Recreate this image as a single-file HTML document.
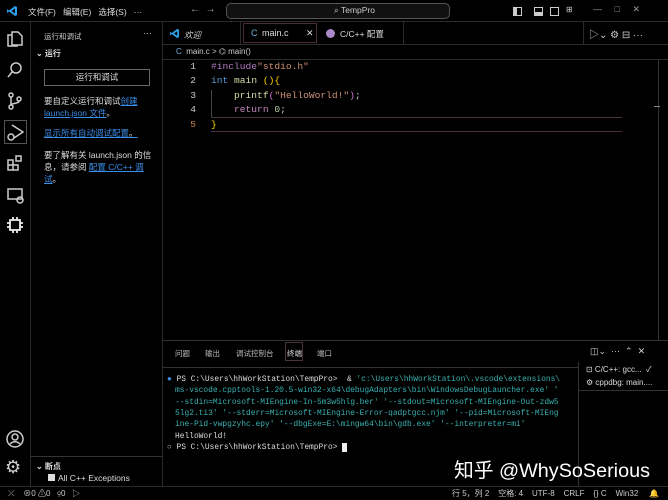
<!DOCTYPE html><html><head><meta charset="utf-8"><style>
*{margin:0;padding:0;box-sizing:border-box}
body{width:668px;height:500px;background:#000;color:#ccc;font-family:"Liberation Sans","Noto Sans CJK SC",sans-serif;font-size:9px;position:relative;overflow:hidden}
.a{position:absolute;white-space:nowrap}
.mono{font-family:"Liberation Mono",monospace}
.ln{position:absolute;width:20px;text-align:right;left:176px;color:#ccc}
.code{position:absolute;left:211px;white-space:pre}
.t{position:absolute;left:175px;white-space:pre;color:#3ab0b0;font-size:7.9px}
svg{position:absolute}
.ic{position:absolute;left:5px}
</style></head><body>
<!-- title bar -->
<div class="a" style="left:0;top:0;width:668px;height:22px;background:#000;border-bottom:1px solid #2b2b2b"></div>
<svg style="left:6px;top:5px" width="12" height="12" viewBox="0 0 12 12"><path d="M9 1 L11 2 V10 L9 11 L3 6.5 L1 8 V4 L3 5.5Z M9 3.5 L5.5 6 L9 8.5Z" fill="#2f9fe8" fill-rule="evenodd"/></svg>
<div class="a" style="left:28px;top:6px;font-size:8.5px;color:#ddd">文件(F)&nbsp;&nbsp;&nbsp;编辑(E)&nbsp;&nbsp;&nbsp;选择(S)&nbsp;&nbsp;&nbsp;···</div>
<div class="a" style="left:190px;top:4px;font-size:10px;color:#aaa">←&nbsp;&nbsp;→</div>
<div class="a" style="left:226px;top:3px;width:224px;height:16px;border:1px solid #555;border-radius:5px;background:#111"></div>
<div class="a" style="left:334px;top:5px;font-size:8.5px;color:#ccc">⌕ TempPro</div>
<div class="a" style="left:513px;top:7px;width:9px;height:9px;border:1.5px solid #ccc;border-left-width:4px"></div>
<div class="a" style="left:534px;top:7px;width:9px;height:9px;border:1.5px solid #ccc;border-bottom-width:4px"></div>
<div class="a" style="left:550px;top:7px;width:9px;height:9px;border:1.5px solid #ccc"></div>
<div class="a" style="left:566px;top:5px;font-size:8px;color:#ccc">⊞</div>
<div class="a" style="left:593px;top:4px;font-size:9px;color:#999">—&nbsp;&nbsp;&nbsp;&nbsp;&nbsp;□&nbsp;&nbsp;&nbsp;&nbsp;&nbsp;✕</div>
<!-- activity bar -->
<div class="a" style="left:30px;top:22px;width:1px;height:464px;background:#2b2b2b"></div>
<div class="a" style="left:4px;top:120px;width:23px;height:24px;border:1px solid #555"></div>
<svg class="ic" style="top:29px" width="20" height="20" viewBox="0 0 20 20" fill="none" stroke="#ccc" stroke-width="1.5"><path d="M7 3h6l4 4v9H7z M7 6H3v11h9v-1"/></svg>
<svg class="ic" style="top:60px" width="20" height="20" viewBox="0 0 20 20" fill="none" stroke="#ccc" stroke-width="1.5"><circle cx="11" cy="8" r="5"/><path d="M7.5 11.5L3 17"/></svg>
<svg class="ic" style="top:91px" width="20" height="20" viewBox="0 0 20 20" fill="none" stroke="#ccc" stroke-width="1.5"><circle cx="6" cy="4" r="2"/><circle cx="6" cy="16" r="2"/><circle cx="14" cy="8" r="2"/><path d="M6 6v8M14 10c0 3-8 2-8 4"/></svg>
<svg class="ic" style="top:122px" width="20" height="20" viewBox="0 0 20 20" fill="none" stroke="#ccc" stroke-width="1.5"><path d="M7 3l11 7-9 6"/><circle cx="6" cy="15" r="3"/></svg>
<svg class="ic" style="top:153px" width="20" height="20" viewBox="0 0 20 20" fill="none" stroke="#ccc" stroke-width="1.5"><path d="M3 7h5v5H3zM8 12h5v5H8zM3 12h5v5H3zM11 3h5v5h-5z"/></svg>
<svg class="ic" style="top:185px" width="20" height="20" viewBox="0 0 20 20" fill="none" stroke="#ccc" stroke-width="1.5"><path d="M3 4h14v10H3z"/><circle cx="15" cy="15" r="3"/></svg>
<svg class="ic" style="top:215px" width="20" height="20" viewBox="0 0 20 20" fill="none" stroke="#eee" stroke-width="1.8"><path d="M5 5h10v10H5zM8 2v3M12 2v3M8 15v3M12 15v3M2 8h3M2 12h3M15 8h3M15 12h3"/></svg>
<svg class="ic" style="top:429px" width="20" height="20" viewBox="0 0 20 20" fill="none" stroke="#ccc" stroke-width="1.5"><circle cx="10" cy="10" r="8"/><circle cx="10" cy="8" r="3"/><path d="M5 15c3-3 7-3 10 0"/></svg>
<div class="a" style="left:5px;top:457px;font-size:18px;color:#ccc">⚙</div>
<!-- sidebar -->
<div class="a" style="left:162px;top:22px;width:1px;height:464px;background:#2b2b2b"></div>
<div class="a" style="left:44px;top:31px;font-size:7.5px;color:#ccc">运行和调试</div>
<div class="a" style="left:143px;top:28px;color:#ccc">···</div>
<div class="a" style="left:36px;top:48px;font-size:8px;color:#ddd;font-weight:bold">⌄ 运行</div>
<div class="a" style="left:44px;top:69px;width:106px;height:17px;border:1px solid #666;font-size:8.5px;color:#ddd;text-align:center;line-height:15px">运行和调试</div>
<div class="a" style="left:44px;top:95px;font-size:8.5px;color:#ddd;line-height:12px;width:112px;white-space:normal">要自定义运行和调试<span style="color:#3b8eea;text-decoration:underline">创建 launch.json 文件</span>。</div>
<div class="a" style="left:44px;top:127px;font-size:8.5px;color:#3b8eea;text-decoration:underline">显示所有自动调试配置<span style="color:#ddd;text-decoration:none">。</span></div>
<div class="a" style="left:44px;top:149px;font-size:8.5px;color:#ddd;line-height:12px;width:112px;white-space:normal">要了解有关 launch.json 的信息，请参阅 <span style="color:#3b8eea;text-decoration:underline">配置 C/C++ 调试</span>。</div>
<div class="a" style="left:31px;top:456px;width:131px;height:1px;background:#333"></div>
<div class="a" style="left:36px;top:461px;font-size:8px;color:#ddd;font-weight:bold">⌄ 断点</div>
<div class="a" style="left:48px;top:474px;width:7px;height:7px;background:#ddd"></div>
<div class="a" style="left:58px;top:473px;font-size:8.5px;color:#ddd">All C++ Exceptions</div>
<!-- tabs -->
<div class="a" style="left:163px;top:22px;width:505px;height:23px;background:#000;border-bottom:1px solid #2b2b2b"></div>
<div class="a" style="left:163px;top:22px;width:78px;height:23px;border-right:1px solid #2b2b2b"></div>
<svg style="left:169px;top:28px" width="11" height="11" viewBox="0 0 12 12"><path d="M9 1 L11 2 V10 L9 11 L3 6.5 L1 8 V4 L3 5.5Z M9 3.5 L5.5 6 L9 8.5Z" fill="#2f9fe8" fill-rule="evenodd"/></svg>
<div class="a" style="left:184px;top:29px;font-size:8.5px;color:#ccc;font-style:italic">欢迎</div>
<div class="a" style="left:243px;top:23px;width:74px;height:20px;border:1px solid #4a2e2e"></div>
<div class="a" style="left:251px;top:28px;font-size:9px;color:#6fb3e0">C</div>
<div class="a" style="left:262px;top:28px;font-size:9px;color:#ddd">main.c</div>
<div class="a" style="left:306px;top:28px;font-size:9px;color:#ddd">✕</div>
<div class="a" style="left:326px;top:29px;width:9px;height:9px;border-radius:50%;background:#a98ac6"></div>
<div class="a" style="left:340px;top:28px;font-size:8.5px;color:#ddd">C/C++ 配置</div>
<div class="a" style="left:403px;top:22px;width:1px;height:23px;background:#2b2b2b"></div>
<div class="a" style="left:583px;top:22px;width:1px;height:23px;background:#2b2b2b"></div>
<div class="a" style="left:589px;top:26px;font-size:10px;color:#ccc">▷⌄&nbsp;⚙&nbsp;⊟&nbsp;···</div>
<!-- breadcrumb -->
<div class="a" style="left:176px;top:47px;font-size:8px;color:#ccc"><span style="color:#6fb3e0">C</span>&nbsp; main.c &gt; ⌬ main()</div>
<div class="a" style="left:163px;top:59px;width:505px;height:1px;background:#2b2b2b"></div>
<!-- code -->
<div class="mono" style="font-size:9.6px;line-height:14.4px">
<div class="ln" style="top:60px">1</div><div class="ln" style="top:74.4px">2</div><div class="ln" style="top:88.8px">3</div><div class="ln" style="top:103.2px">4</div><div class="ln" style="top:117.6px;color:#c8834b">5</div>
<div class="code" style="top:60px"><span style="color:#b07cc0">#include</span><span style="color:#ce9178">"stdio.h"</span></div>
<div class="code" style="top:74.4px"><span style="color:#569cd6">int</span> <span style="color:#dcdcaa">main</span> <span style="color:#ffd700">(){</span></div>
<div class="code" style="top:88.8px">    <span style="color:#dcdcaa">printf</span><span style="color:#da70d6">(</span><span style="color:#ce9178">"HelloWorld!"</span><span style="color:#da70d6">)</span>;</div>
<div class="code" style="top:103.2px">    <span style="color:#c586c0">return</span> <span style="color:#b5cea8">0</span>;</div>
<div class="code" style="top:117.6px;color:#ffd700">}</div>
</div>
<div class="a" style="left:211px;top:90px;width:1px;height:28px;background:#444"></div>
<div class="a" style="left:211px;top:117px;width:411px;height:1px;background:#4a3535"></div>
<div class="a" style="left:211px;top:131px;width:411px;height:1px;background:#4a3535"></div>
<div class="a" style="left:658px;top:60px;width:1px;height:280px;background:#333"></div>
<div class="a" style="left:654px;top:106px;width:6px;height:1px;background:#888"></div>
<!-- panel -->
<div class="a" style="left:163px;top:340px;width:505px;height:1px;background:#333"></div>
<div class="a" style="left:175px;top:348px;font-size:7.5px;color:#bbb">问题</div>
<div class="a" style="left:205px;top:348px;font-size:7.5px;color:#bbb">输出</div>
<div class="a" style="left:236px;top:348px;font-size:7.5px;color:#bbb">调试控制台</div>
<div class="a" style="left:285px;top:342px;width:18px;height:19px;border:1px solid #4a3535"></div>
<div class="a" style="left:287px;top:348px;font-size:7.5px;color:#ddd">终端</div>
<div class="a" style="left:317px;top:348px;font-size:7.5px;color:#bbb">端口</div>
<div class="a" style="left:590px;top:346px;font-size:9px;color:#ccc">◫⌄&nbsp;&nbsp;···&nbsp;&nbsp;⌃&nbsp;&nbsp;✕</div>
<div class="a" style="left:163px;top:367px;width:415px;height:1px;background:#333"></div>
<div class="a" style="left:578px;top:362px;width:1px;height:124px;background:#333"></div>
<div class="a" style="left:586px;top:364px;font-size:8px;color:#ddd">⊡ C/C++: gcc...&nbsp;&nbsp;✓</div>
<div class="a" style="left:586px;top:378px;font-size:8px;color:#ddd">⚙ cppdbg: main....</div>
<div class="a" style="left:578px;top:390px;width:90px;height:1px;background:#333"></div>
<div class="mono" style="line-height:11.3px">
<div class="t" style="top:374px;color:#ddd;left:167px"><span style="color:#3b8eea">●</span> PS C:\Users\hhWorkStation\TempPro>  &amp; <span style="color:#3ab0b0">'c:\Users\hhWorkStation\.vscode\extensions\</span></div>
<div class="t" style="top:385.3px">ms-vscode.cpptools-1.20.5-win32-x64\debugAdapters\bin\WindowsDebugLauncher.exe' '</div>
<div class="t" style="top:396.6px">--stdin=Microsoft-MIEngine-In-5m3w5hlg.ber' '--stdout=Microsoft-MIEngine-Out-zdw5</div>
<div class="t" style="top:407.9px">5lg2.ti3' '--stderr=Microsoft-MIEngine-Error-qadptgcc.njm' '--pid=Microsoft-MIEng</div>
<div class="t" style="top:419.2px">ine-Pid-vwpgzyhc.epy' '--dbgExe=E:\mingw64\bin\gdb.exe' '--interpreter=mi'</div>
<div class="t" style="top:430.5px;color:#ddd">HelloWorld!</div>
<div class="t" style="top:441.8px;color:#ddd;left:167px">○ PS C:\Users\hhWorkStation\TempPro> <span style="background:#eee">&nbsp;</span></div>
</div>
<div class="a" style="left:454px;top:454px;font-size:19.8px;color:#fff">知乎 @WhySoSerious</div>
<!-- status bar -->
<div class="a" style="left:0;top:486px;width:668px;height:14px;background:#000;border-top:1px solid #2b2b2b"></div>
<div class="a" style="left:8px;top:488px;font-size:8px;color:#ccc">⤫&nbsp;&nbsp;&nbsp;&nbsp;⊗0 ⚠0&nbsp;&nbsp;&nbsp;⚲0&nbsp;&nbsp;&nbsp;▷</div>
<div class="a" style="left:452px;top:488px;font-size:8px;color:#ccc">行 5，列 2&nbsp;&nbsp;&nbsp;&nbsp;空格: 4&nbsp;&nbsp;&nbsp;&nbsp;UTF-8&nbsp;&nbsp;&nbsp;&nbsp;CRLF&nbsp;&nbsp;&nbsp;&nbsp;{} C&nbsp;&nbsp;&nbsp;&nbsp;Win32&nbsp;&nbsp;&nbsp;&nbsp;&nbsp;🔔</div>
</body></html>
